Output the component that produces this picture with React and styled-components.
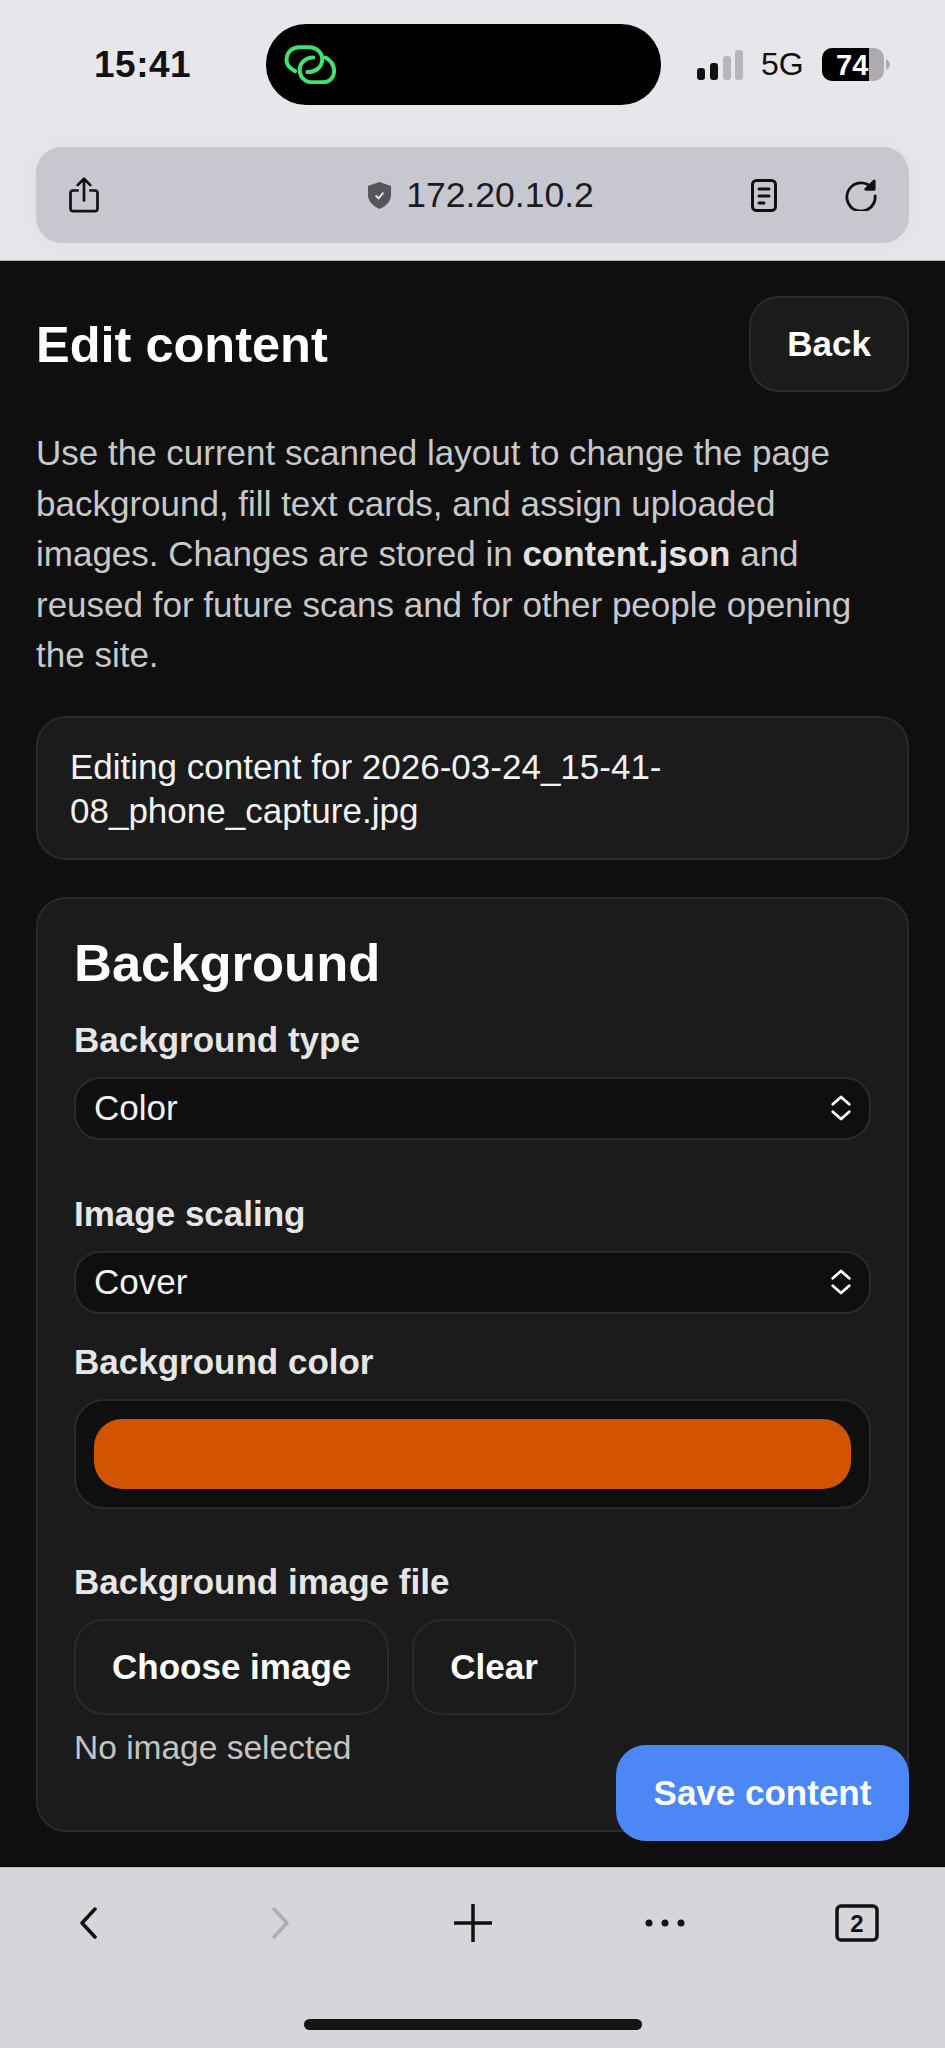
import React from "react";
import styled, { createGlobalStyle } from "styled-components";

const GlobalStyle = createGlobalStyle`
  html, body {
    margin: 0;
    padding: 0;
    background: #0f0f10;
  }
  * {
    box-sizing: border-box;
  }
`;

const Phone = styled.div`
  width: 945px;
  height: 2048px;
  display: flex;
  flex-direction: column;
  position: relative;
  overflow: hidden;
  font-family: "Liberation Sans", Arial, sans-serif;
`;

const TopChrome = styled.div`
  height: 261px;
  flex: none;
  background: #e6e6eb;
  padding: 24px 36px 0;
  border-bottom: 1px solid #b9b9be;
`;

const StatusBar = styled.div`
  height: 81px;
  display: flex;
  align-items: center;
  margin-bottom: 42px;
`;

const Time = styled.div`
  width: 230px;
  padding-left: 58px;
  font-size: 37px;
  font-weight: 700;
  color: #111;
  letter-spacing: 0.5px;
`;

const Island = styled.div`
  width: 395px;
  height: 81px;
  background: #000;
  border-radius: 40px;
  display: flex;
  align-items: center;
  padding-left: 18px;
`;

const StatusRight = styled.div`
  margin-left: 36px;
  display: flex;
  align-items: center;
  gap: 18px;
`;

const Network = styled.span`
  font-size: 32px;
  color: #111;
`;

const UrlBar = styled.div`
  height: 96px;
  background: #c7c7d0;
  border-radius: 26px;
  box-shadow: 0 0 30px rgba(0, 0, 0, 0.04);
  display: flex;
  align-items: center;
  padding: 0 32px;
`;

const Address = styled.div`
  flex: 1;
  display: flex;
  align-items: center;
  justify-content: center;
  gap: 14px;
  padding-left: 110px;
  font-size: 35.5px;
  color: #1c1c20;
`;

const UrlActions = styled.div`
  display: flex;
  align-items: center;
  gap: 68px;
`;

const Main = styled.main`
  flex: 1;
  background: #0f0f10;
  padding: 35px 36px 0;
  overflow: hidden;
`;

const Header = styled.div`
  display: flex;
  align-items: center;
  justify-content: space-between;
  margin-bottom: 36px;
`;

const Title = styled.h1`
  margin: 0;
  font-size: 50.5px;
  font-weight: 700;
  color: #fff;
`;

const Button = styled.button`
  height: 96px;
  padding: 0 36px;
  background: #1b1b1c;
  border: 2px solid #2a2a2c;
  border-radius: 30px;
  font: 700 35px "Liberation Sans", Arial, sans-serif;
  color: #fff;
`;

const Intro = styled.p`
  max-width: 860px;
  margin: 0 0 35px;
  font-size: 35px;
  line-height: 50.5px;
  color: #c8c8c8;
  b {
    color: #e2e2e2;
  }
`;

const Card = styled.section`
  background: #1b1b1c;
  border: 2px solid #2a2a2c;
  border-radius: 30px;
`;

const InfoCard = styled(Card)`
  height: 144px;
  padding: 27px 32px;
  margin-bottom: 37px;
  font-size: 35px;
  line-height: 44px;
  color: #f2f2f2;
`;

const FormCard = styled(Card)`
  height: 935px;
  padding: 33px 36px;
`;

const CardTitle = styled.h2`
  margin: 0 0 26px;
  font-size: 52.5px;
  line-height: 62px;
  font-weight: 700;
  color: #fff;
`;

const Label = styled.div`
  font-size: 35px;
  line-height: 40px;
  font-weight: 700;
  color: #e6e6e6;
  margin-bottom: 17px;
`;

const Select = styled.div`
  height: 63px;
  background: #0f0f10;
  border: 2px solid #2a2a2c;
  border-radius: 26px;
  display: flex;
  align-items: center;
  justify-content: space-between;
  padding: 0 17px 0 18px;
  font-size: 35px;
  color: #f2f2f2;
  margin-bottom: ${(p) => p.$gap}px;
`;

const ColorField = styled.div`
  height: 110px;
  background: #0f0f10;
  border: 2px solid #2a2a2c;
  border-radius: 30px;
  padding: 18px;
  margin-bottom: 53px;
`;

const Swatch = styled.div`
  height: 100%;
  background: #d35400;
  border-radius: 28px;
`;

const ButtonRow = styled.div`
  display: flex;
  gap: 23px;
  margin-bottom: 13px;
`;

const Note = styled.div`
  font-size: 33.5px;
  line-height: 40px;
  color: #c4c4c4;
`;

const SaveButton = styled.button`
  position: absolute;
  left: 616px;
  top: 1745px;
  width: 293px;
  height: 96px;
  background: #4c87f5;
  border: none;
  border-radius: 30px;
  font: 700 35px "Liberation Sans", Arial, sans-serif;
  color: #fff;
`;

const BottomBar = styled.nav`
  height: 181px;
  flex: none;
  background: #d5d5da;
  border-top: 1px solid #b9b9be;
  padding-top: 23px;
  display: flex;
  flex-direction: column;
  align-items: center;
`;

const NavIcons = styled.div`
  width: 100%;
  display: flex;
  align-items: center;
  justify-content: space-between;
  padding: 0 56px;
`;

const NavSlot = styled.div`
  width: 64px;
  height: 64px;
  display: flex;
  align-items: center;
  justify-content: center;
`;

const TabCount = styled.text`
  font: 700 24px "Liberation Sans", Arial, sans-serif;
  fill: #111;
`;

const BatteryText = styled.text`
  font: 700 29px "Liberation Sans", Arial, sans-serif;
  fill: #fff;
`;

const HomeBar = styled.div`
  width: 338px;
  height: 11px;
  margin-top: 64px;
  background: #141414;
  border-radius: 6px;
`;

const LinkIcon = () => (
  <svg width="52" height="39" viewBox="130 105 156 118" fill="none" stroke="#3fe36d" strokeWidth="12" strokeLinecap="round">
    <path d="M163 184 C145 175 136 163 137 148 C138 125 155 112 175 112 L205 112 C228 112 245 128 245 148 C245 172 225 187 200 187" />
    <path d="M218 143 C195 143 177 158 177 180 C177 203 193 218 215 218 L245 218 C268 218 281 203 281 183 C281 165 270 152 255 143" />
  </svg>
);

const Signal = () => (
  <svg width="46" height="30" viewBox="0 0 46 30">
    <rect x="0" y="18" width="8" height="12" rx="3" fill="#111" />
    <rect x="13" y="13" width="8" height="17" rx="3" fill="#111" />
    <rect x="26" y="6" width="8" height="24" rx="3" fill="#b5b5ba" />
    <rect x="38" y="0" width="8" height="30" rx="3" fill="#b5b5ba" />
  </svg>
);

const Battery = () => (
  <svg width="68" height="33" viewBox="0 0 68 33">
    <path d="M10 0 H52 A10 10 0 0 1 62 10 V23 A10 10 0 0 1 52 33 H10 A10 10 0 0 1 0 23 V10 A10 10 0 0 1 10 0 Z" fill="#ababb0" />
    <path d="M10 0 H47 V33 H10 A10 10 0 0 1 0 23 V10 A10 10 0 0 1 10 0 Z" fill="#000" />
    <path d="M64 11 C66 12 68 14 68 16.5 C68 19 66 21 64 22 Z" fill="#ababb0" />
    <BatteryText x="14" y="27">74</BatteryText>
  </svg>
);

const ShareIcon = () => (
  <svg width="32" height="36" viewBox="0 0 34 40" fill="none" stroke="#111" strokeWidth="3" strokeLinecap="round" strokeLinejoin="round">
    <path d="M10 15 H5 A3 3 0 0 0 2 18 V35 A3 3 0 0 0 5 38 H29 A3 3 0 0 0 32 35 V18 A3 3 0 0 0 29 15 H24" />
    <path d="M17 26 V3 M10 9 L17 2 L24 9" />
  </svg>
);

const ShieldIcon = () => (
  <svg width="25" height="27" viewBox="0 0 26 28">
    <path d="M13 0 L25 4 V13 C25 20 20 25 13 28 C6 25 1 20 1 13 V4 Z" fill="#55555c" />
    <path d="M9 14 L12 17 L17 11" fill="none" stroke="#e6e6eb" strokeWidth="2" />
  </svg>
);

const ReaderIcon = () => (
  <svg width="26" height="33" viewBox="0 0 26 33" fill="none" stroke="#111" strokeWidth="3" strokeLinecap="round">
    <rect x="1.5" y="1.5" width="23" height="30" rx="4" />
    <path d="M8 10 H18 M8 17 H18 M8 24 H13" />
  </svg>
);

const ReloadIcon = () => (
  <svg width="32" height="32" viewBox="0 0 34 34" fill="none" stroke="#111" strokeWidth="3" strokeLinecap="round">
    <path d="M29 10 A15 15 0 1 0 32 18" />
    <path d="M31 2 V11 H22 Z" fill="#111" strokeLinejoin="round" />
  </svg>
);

const UpDown = () => (
  <svg width="22" height="26" viewBox="0 0 24 28" fill="none" stroke="#fff" strokeWidth="3" strokeLinecap="round" strokeLinejoin="round">
    <path d="M3 10 L12 2 L21 10 M3 18 L12 26 L21 18" />
  </svg>
);

const Chevron = ({ flip, color }) => (
  <svg width="17" height="32" viewBox="0 0 17 32" fill="none" stroke={color} strokeWidth="3.5" strokeLinecap="round" strokeLinejoin="round">
    <path d={flip ? "M2 2 L15 16 L2 30" : "M15 2 L2 16 L15 30"} />
  </svg>
);

const PlusIcon = () => (
  <svg width="40" height="40" viewBox="0 0 40 40" stroke="#111" strokeWidth="3.5">
    <path d="M20 1 V39 M1 20 H39" />
  </svg>
);

const MoreIcon = () => (
  <svg width="40" height="10" viewBox="0 0 40 10" fill="#111">
    <circle cx="4" cy="5" r="3.5" />
    <circle cx="20" cy="5" r="3.5" />
    <circle cx="36" cy="5" r="3.5" />
  </svg>
);

const TabsIcon = () => (
  <svg width="44" height="38" viewBox="0 0 44 38">
    <rect x="2" y="2" width="40" height="34" rx="4" fill="none" stroke="#111" strokeWidth="3.5" />
    <TabCount x="22" y="28" textAnchor="middle">2</TabCount>
  </svg>
);

const App = () => (
  <Phone>
    <GlobalStyle />
    <TopChrome>
      <StatusBar>
        <Time>15:41</Time>
        <Island>
          <LinkIcon />
        </Island>
        <StatusRight>
          <Signal />
          <Network>5G</Network>
          <Battery />
        </StatusRight>
      </StatusBar>
      <UrlBar>
        <ShareIcon />
        <Address>
          <ShieldIcon />
          172.20.10.2
        </Address>
        <UrlActions>
          <ReaderIcon />
          <ReloadIcon />
        </UrlActions>
      </UrlBar>
    </TopChrome>
    <Main>
      <Header>
        <Title>Edit content</Title>
        <Button>Back</Button>
      </Header>
      <Intro>
        Use the current scanned layout to change the page background, fill text cards, and assign uploaded images. Changes are stored in <b>content.json</b> and reused for future scans and for other people opening the site.
      </Intro>
      <InfoCard>Editing content for 2026-03-24_15-41-08_phone_capture.jpg</InfoCard>
      <FormCard>
        <CardTitle>Background</CardTitle>
        <Label>Background type</Label>
        <Select $gap={54}>
          Color
          <UpDown />
        </Select>
        <Label>Image scaling</Label>
        <Select $gap={28}>
          Cover
          <UpDown />
        </Select>
        <Label>Background color</Label>
        <ColorField>
          <Swatch />
        </ColorField>
        <Label>Background image file</Label>
        <ButtonRow>
          <Button>Choose image</Button>
          <Button>Clear</Button>
        </ButtonRow>
        <Note>No image selected</Note>
      </FormCard>
    </Main>
    <SaveButton>Save content</SaveButton>
    <BottomBar>
      <NavIcons>
        <NavSlot>
          <Chevron color="#111" />
        </NavSlot>
        <NavSlot>
          <Chevron flip color="#aeaeb3" />
        </NavSlot>
        <NavSlot>
          <PlusIcon />
        </NavSlot>
        <NavSlot>
          <MoreIcon />
        </NavSlot>
        <NavSlot>
          <TabsIcon />
        </NavSlot>
      </NavIcons>
      <HomeBar />
    </BottomBar>
  </Phone>
);

export default App;
